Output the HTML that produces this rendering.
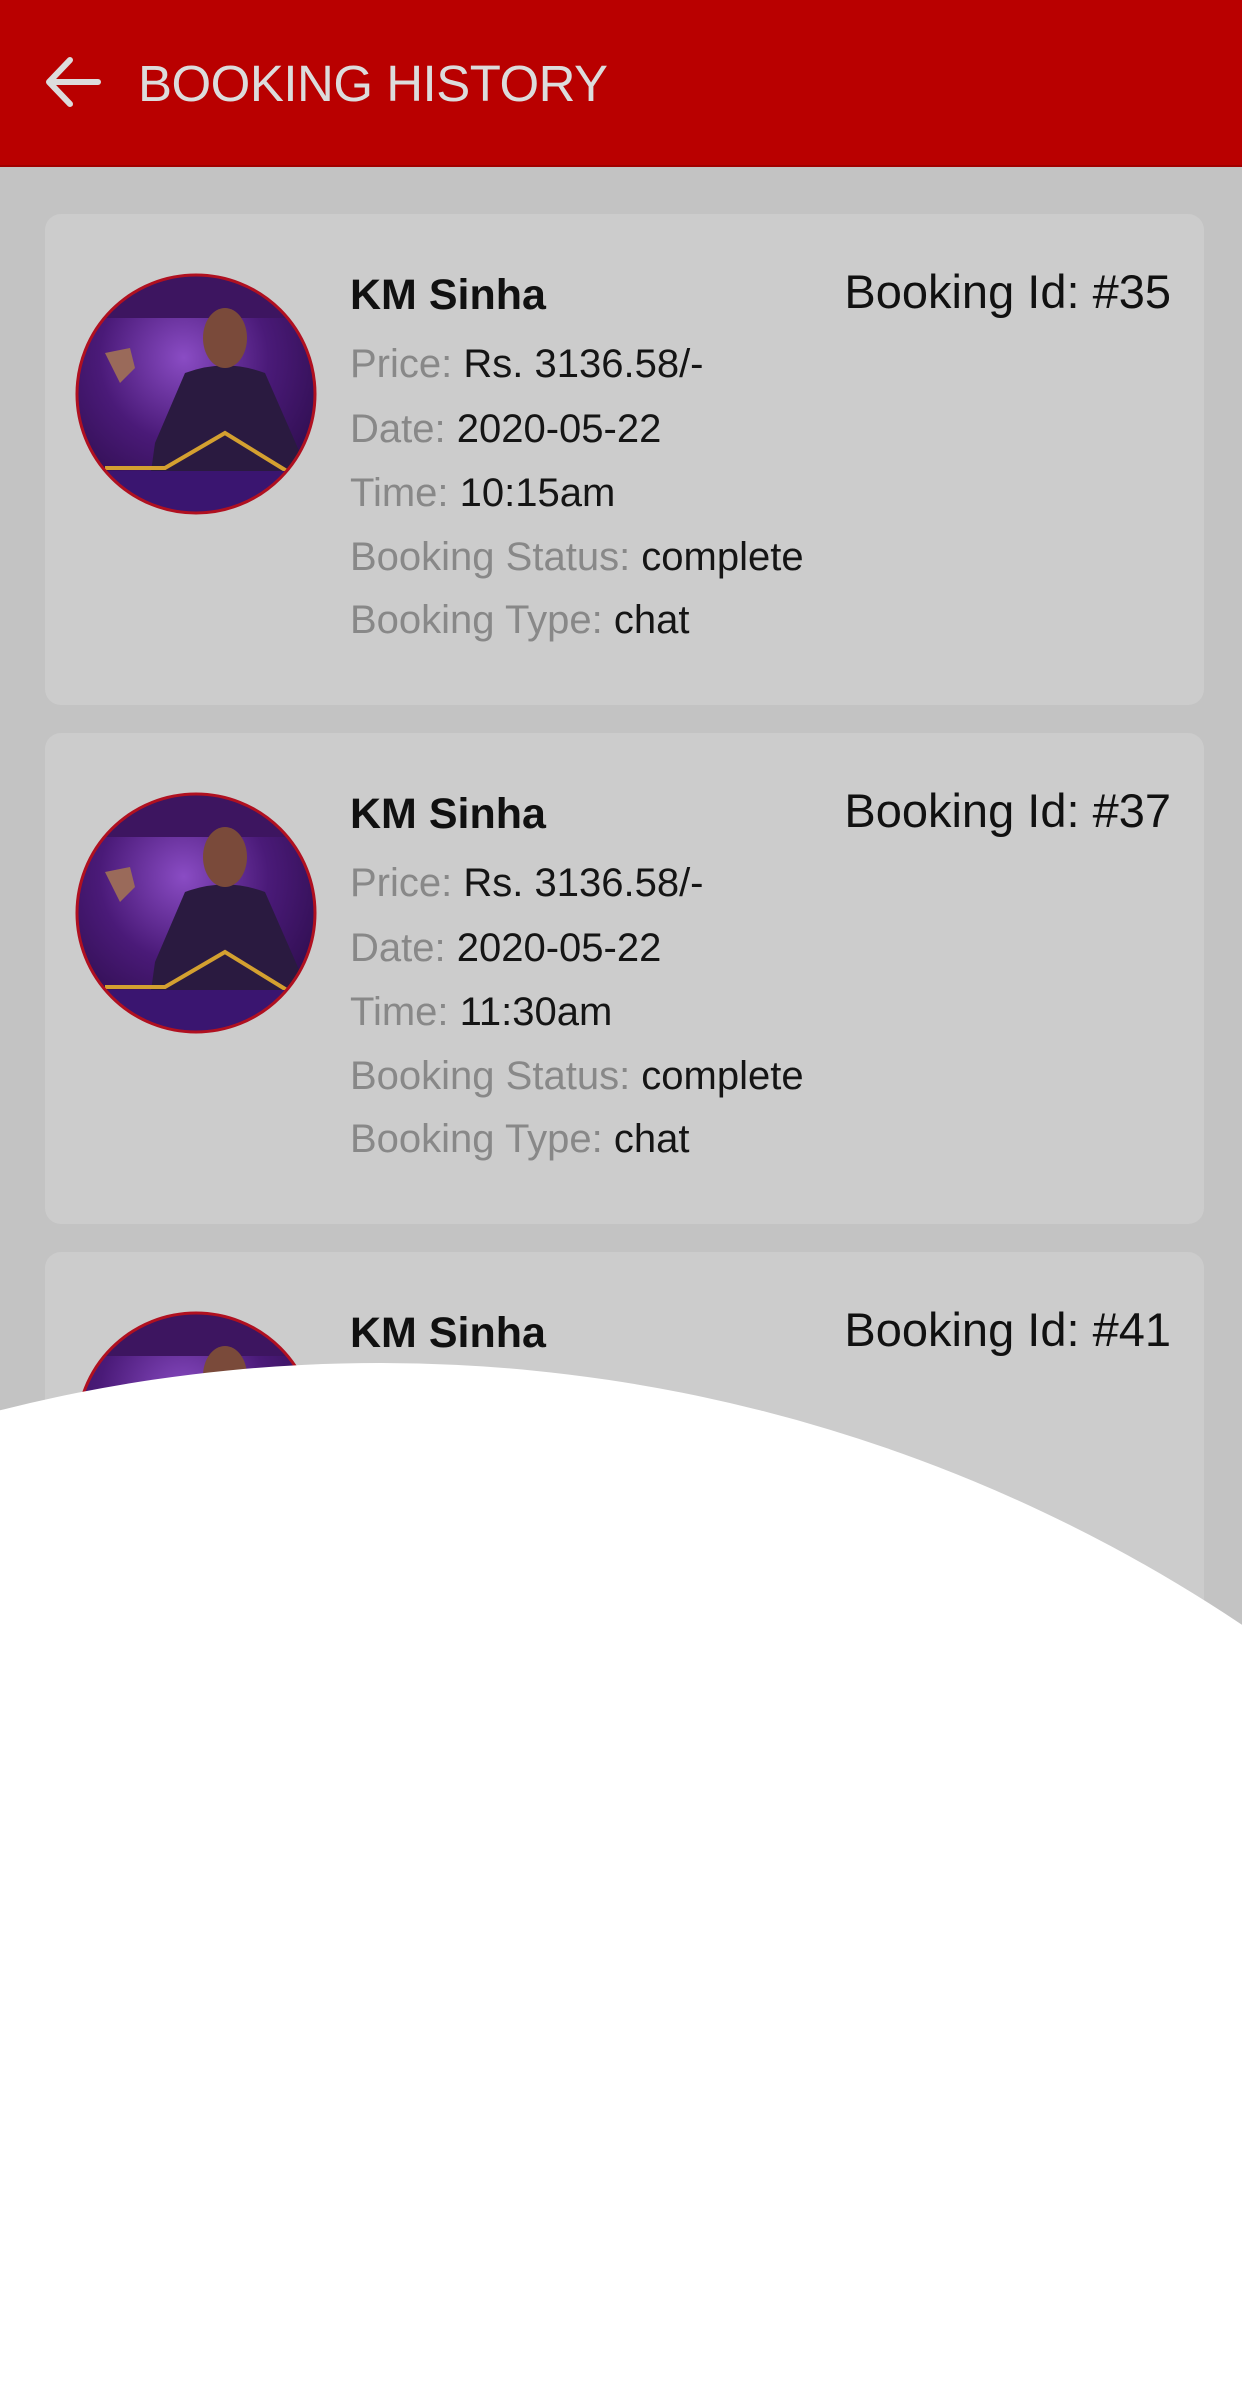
<!DOCTYPE html>
<html><head><meta charset="utf-8"><style>
*{margin:0;padding:0;box-sizing:border-box}
html,body{width:1242px;height:2400px;overflow:hidden}
body{background:#c3c3c3;position:relative;font-family:"Liberation Sans",sans-serif}
.wrap{position:absolute;left:0;top:0;width:1242px;height:2400px;overflow:hidden}
.hdr{position:absolute;left:0;top:0;width:1242px;height:167px;background:#b90000;border-bottom:2px solid #a00000}
.hdr .t{position:absolute;left:138px;top:54px;font-size:51px;color:#dcdcdc;letter-spacing:-0.5px}
.card{position:absolute;left:45px;width:1159px;height:491px;background:#cccccc;border-radius:16px}
.av{position:absolute;left:30px;top:59px;width:242px;height:242px}
.nm{position:absolute;left:305px;top:57px;font-size:43px;font-weight:bold;color:#111}
.id{position:absolute;right:33px;top:50px;font-size:47px;color:#111}
.ln{position:absolute;left:305px;font-size:40px;color:#888;white-space:nowrap}
.ln b{font-weight:normal;color:#151515}
.wc{position:absolute;left:0;top:1363px;width:1242px;height:1037px}
</style></head><body><div class="wrap">
<div class="hdr">
<svg style="position:absolute;left:44px;top:56px" width="58" height="52" viewBox="0 0 58 52"><path d="M54 26H6M26 4L5 26L26 48" fill="none" stroke="#dcdcdc" stroke-width="6" stroke-linecap="round" stroke-linejoin="round"/></svg>
<div class="t">BOOKING HISTORY</div>
</div>

<svg width="0" height="0" style="position:absolute"><defs>
<clipPath id="cc"><circle cx="121" cy="121" r="119"/></clipPath>
<radialGradient id="rg" cx="0.45" cy="0.35" r="0.7"><stop offset="0" stop-color="#8a4cc4"/><stop offset="0.5" stop-color="#4a1a78"/><stop offset="1" stop-color="#2a0c48"/></radialGradient>
</defs></svg>

<div class="card" style="top:214px">
<svg class="av" viewBox="0 0 242 242"><g clip-path="url(#cc)"><rect width="242" height="242" fill="url(#rg)"/><rect y="0" width="242" height="45" fill="#3d1560"/><path d="M110 100 Q150 85 190 100 L225 180 L225 242 L70 242 L80 170 Z" fill="#2a1a40"/><ellipse cx="150" cy="65" rx="22" ry="30" fill="#7a4a3a"/><path d="M30 80 L45 110 L60 95 L55 75" fill="#9a6a5a"/><path d="M30 195 L90 195 L150 160 L215 200" fill="none" stroke="#d4a030" stroke-width="4"/><rect y="198" width="242" height="44" fill="#3a1570"/></g><circle cx="121" cy="121" r="119" fill="none" stroke="#b01020" stroke-width="3"/></svg>
<div class="nm">KM Sinha</div><div class="id">Booking Id: #35</div>
<div class="ln" style="top:128px">Price: <b>Rs. 3136.58/-</b></div>
<div class="ln" style="top:193px">Date: <b>2020-05-22</b></div>
<div class="ln" style="top:257px">Time: <b>10:15am</b></div>
<div class="ln" style="top:321px">Booking Status: <b>complete</b></div>
<div class="ln" style="top:384px">Booking Type: <b>chat</b></div>
</div>

<div class="card" style="top:733px">
<svg class="av" viewBox="0 0 242 242"><g clip-path="url(#cc)"><rect width="242" height="242" fill="url(#rg)"/><rect y="0" width="242" height="45" fill="#3d1560"/><path d="M110 100 Q150 85 190 100 L225 180 L225 242 L70 242 L80 170 Z" fill="#2a1a40"/><ellipse cx="150" cy="65" rx="22" ry="30" fill="#7a4a3a"/><path d="M30 80 L45 110 L60 95 L55 75" fill="#9a6a5a"/><path d="M30 195 L90 195 L150 160 L215 200" fill="none" stroke="#d4a030" stroke-width="4"/><rect y="198" width="242" height="44" fill="#3a1570"/></g><circle cx="121" cy="121" r="119" fill="none" stroke="#b01020" stroke-width="3"/></svg>
<div class="nm">KM Sinha</div><div class="id">Booking Id: #37</div>
<div class="ln" style="top:128px">Price: <b>Rs. 3136.58/-</b></div>
<div class="ln" style="top:193px">Date: <b>2020-05-22</b></div>
<div class="ln" style="top:257px">Time: <b>11:30am</b></div>
<div class="ln" style="top:321px">Booking Status: <b>complete</b></div>
<div class="ln" style="top:384px">Booking Type: <b>chat</b></div>
</div>

<div class="card" style="top:1252px;height:460px">
<svg class="av" viewBox="0 0 242 242"><g clip-path="url(#cc)"><rect width="242" height="242" fill="url(#rg)"/><rect y="0" width="242" height="45" fill="#3d1560"/><path d="M110 100 Q150 85 190 100 L225 180 L225 242 L70 242 L80 170 Z" fill="#2a1a40"/><ellipse cx="150" cy="65" rx="22" ry="30" fill="#7a4a3a"/></g><circle cx="121" cy="121" r="119" fill="none" stroke="#b01020" stroke-width="3"/></svg>
<div class="nm">KM Sinha</div><div class="id">Booking Id: #41</div>
</div>

<svg class="wc" viewBox="0 0 1242 1037"><circle cx="380" cy="1550" r="1550" fill="#fff"/></svg>
</div></body></html>
